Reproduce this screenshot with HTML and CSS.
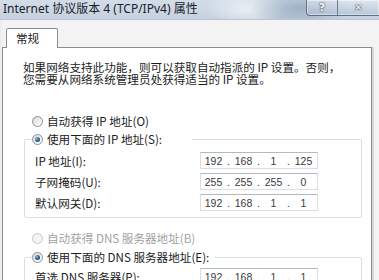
FILE: index.html
```html
<!DOCTYPE html>
<html lang="zh-CN">
<head>
<meta charset="utf-8">
<title>Internet 协议版本 4 (TCP/IPv4) 属性</title>
<link rel="stylesheet" href="styles.css">
</head>
<body>
<div class="window">
  <div class="titlebar">
    <span class="title">Internet 协议版本 4 (TCP/IPv4) 属性</span>
    <div class="caption-buttons">
      <span class="cap help">?</span>
      <span class="cap close">✕</span>
    </div>
  </div>
  <div class="tabs"><div class="tab">常规</div></div>
  <div class="panel">
    <p class="intro">如果网络支持此功能，则可以获取自动指派的 IP 设置。否则，<br>您需要从网络系统管理员处获得适当的 IP 设置。</p>

    <div class="radio-row first"><span class="radio"></span><span>自动获得 IP 地址(O)</span></div>
    <fieldset class="group">
      <legend class="legend wide"><span class="radio checked"></span><span>使用下面的 IP 地址(S):</span></legend>
      <div class="fields">
        <span class="label">IP 地址(I):</span>
        <div class="ipbox"><span class="seg">192</span><span class="dot">.</span><span class="seg">168</span><span class="dot">.</span><span class="seg">1</span><span class="dot">.</span><span class="seg">125</span></div>
        <span class="label">子网掩码(U):</span>
        <div class="ipbox"><span class="seg">255</span><span class="dot">.</span><span class="seg">255</span><span class="dot">.</span><span class="seg">255</span><span class="dot">.</span><span class="seg">0</span></div>
        <span class="label">默认网关(D):</span>
        <div class="ipbox"><span class="seg">192</span><span class="dot">.</span><span class="seg">168</span><span class="dot">.</span><span class="seg">1</span><span class="dot">.</span><span class="seg">1</span></div>
      </div>
    </fieldset>

    <div class="radio-row second disabled"><span class="radio"></span><span>自动获得 DNS 服务器地址(B)</span></div>
    <fieldset class="group dns">
      <legend class="legend"><span class="radio checked"></span><span>使用下面的 DNS 服务器地址(E):</span></legend>
      <div class="fields">
        <span class="label">首选 DNS 服务器(P):</span>
        <div class="ipbox"><span class="seg">192</span><span class="dot">.</span><span class="seg">168</span><span class="dot">.</span><span class="seg">1</span><span class="dot">.</span><span class="seg">1</span></div>
      </div>
    </fieldset>
  </div>
</div>
</body>
</html>
```

FILE: styles.css
```css
html, body {
  margin: 0;
  padding: 0;
  overflow: hidden;
}

body {
  width: 379px;
  height: 280px;
  background: #f0f0f0;
  font-family: "Noto Sans CJK SC", sans-serif;
  font-size: 11.6px;
  color: #1c1c1c;
}

.window {
  width: 379px;
  height: 280px;
  overflow: hidden;
  background: linear-gradient(to right, #e9eaec 0, #f3f3f3 3px);
}

/* ---------- title bar ---------- */
.titlebar {
  height: 20px;
  display: flex;
  align-items: flex-start;
  background:
    radial-gradient(ellipse 50px 22px at 300px 8px, rgba(120, 145, 175, 0.55), rgba(120, 145, 175, 0) 100%),
    radial-gradient(ellipse 40px 18px at 245px 10px, rgba(255, 255, 255, 0.55), rgba(255, 255, 255, 0) 100%),
    linear-gradient(to bottom, #d3dde8 0, #cbd6e2 60%, #c5d1de 100%);
  border-bottom: 1px solid #b9c6d4;
  box-sizing: border-box;
}

.title {
  font-family: "Noto Sans", "Noto Sans CJK SC", sans-serif;
  font-size: 12px;
  line-height: 17px;
  padding-left: 3px;
  color: #1a2230;
  white-space: nowrap;
}

.caption-buttons {
  margin-left: auto;
  display: flex;
  height: 15px;
  border: 1px solid #5f6e80;
  border-top: none;
  border-right: none;
  border-radius: 0 0 0 4px;
  background: linear-gradient(to bottom, rgba(230, 238, 246, 0.55), rgba(170, 188, 208, 0.55));
  box-shadow: inset 0 0 0 1px rgba(255, 255, 255, 0.45);
  overflow: hidden;
}

.cap {
  display: flex;
  align-items: center;
  justify-content: center;
  height: 15px;
  color: #fff;
  font-family: "DejaVu Sans", sans-serif;
  font-weight: bold;
  font-size: 11px;
  line-height: 1;
  text-shadow: 0 0 1px #2b3440, 0 0 2px #2b3440;
}

.help {
  width: 30px;
  border-right: 1px solid #6f7e90;
}

.close {
  width: 41px;
  font-size: 10px;
}

/* ---------- tabs ---------- */
.tabs {
  display: flex;
  padding: 8px 0 0 6px;
}

.tab {
  position: relative;
  z-index: 1;
  width: 52px;
  height: 20px;
  box-sizing: border-box;
  margin-bottom: -1px;
  padding-left: 9px;
  border: 1px solid #898c95;
  border-bottom: none;
  border-radius: 2px 2px 0 0;
  background: #fff;
  line-height: 19px;
}

/* ---------- panel ---------- */
.panel {
  margin-left: 2px;
  width: 370px;
  height: 260px;
  box-sizing: border-box;
  border: 1px solid #898c95;
  background: #fff;
  box-shadow: 2px 0 0 #d8d8d8;
}

.intro {
  margin: 13px 0 0 20px;
  line-height: 12px;
  white-space: nowrap;
}

.radio-row {
  display: flex;
  align-items: center;
  height: 18px;
  margin-left: 29px;
}

.radio-row.first {
  margin-top: 27px;
}

.radio-row.second {
  margin-top: 11px;
}

.radio-row.disabled {
  color: #a2a2a2;
}

.radio {
  position: relative;
  flex: none;
  width: 11px;
  height: 11px;
  box-sizing: border-box;
  margin-right: 4px;
  border: 1px solid #8b9097;
  border-radius: 50%;
  background: linear-gradient(135deg, #d6d8db 0%, #f4f4f4 70%, #ffffff 100%);
}

.disabled .radio {
  border-color: #c6c8cb;
  background: #f4f4f4;
}

.radio.checked::after {
  content: "";
  position: absolute;
  left: 2px;
  top: 2px;
  width: 5px;
  height: 5px;
  border-radius: 50%;
  background: radial-gradient(circle at 35% 35%, #8fc0e2 0%, #2a6a9c 45%, #173c5c 100%);
}

/* ---------- group boxes ---------- */
.group {
  margin: 0 9px 0 21px;
  padding: 4px 0 6px 7px;
  border: 1px solid #d5dfe5;
  border-radius: 2px;
  min-width: 0;
}

.group.dns {
  margin-top: 1px;
  padding-top: 2px;
}

.legend {
  display: flex;
  align-items: center;
  height: 18px;
  padding: 0 6px 0 0;
  white-space: nowrap;
}

.legend.wide {
  padding-right: 30px;
}

.fields {
  display: grid;
  grid-template-columns: 165px 118px;
  row-gap: 4px;
  align-items: center;
  margin-left: 3px;
}

.label {
  white-space: nowrap;
  line-height: 14px;
}

.ipbox {
  display: flex;
  align-items: center;
  height: 17px;
  box-sizing: border-box;
  border: 1px solid #dadde2;
  border-top-color: #b4b8bf;
  background: #fff;
  font-family: "Liberation Sans", sans-serif;
  font-size: 10.5px;
  color: #3a3a3a;
}

.seg {
  width: 25px;
  text-align: center;
}

.dot {
  width: 5px;
  text-align: center;
}
```
